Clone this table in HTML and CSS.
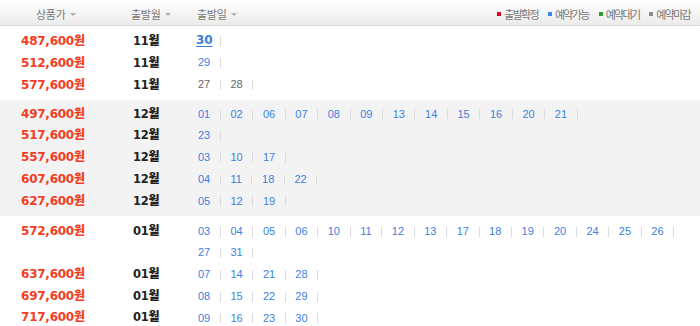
FILE: index.html
```html
<!DOCTYPE html>
<html lang="ko">
<head>
<meta charset="utf-8">
<link rel="stylesheet" href="styles.css">
</head>
<body>
<div class="board">
  <div class="head">
    <div class="hc hc-price">상품가<i class="arr"></i></div>
    <div class="hc hc-month">출발월<i class="arr"></i></div>
    <div class="hc hc-date">출발일<i class="arr"></i></div>
    <ul class="legend">
      <li><i class="sq red"></i>출발확정</li>
      <li><i class="sq blue"></i>예약가능</li>
      <li><i class="sq green"></i>예약대기</li>
      <li><i class="sq gray"></i>예약마감</li>
    </ul>
  </div>

  <div class="group g1">
    <div class="row"><div class="price">487,600<b>원</b></div><div class="month">11<b>월</b></div><div class="dates"><span class="it"><a class="on">30</a></span></div></div>
    <div class="row"><div class="price">512,600<b>원</b></div><div class="month">11<b>월</b></div><div class="dates"><span class="it"><a>29</a></span></div></div>
    <div class="row"><div class="price">577,600<b>원</b></div><div class="month">11<b>월</b></div><div class="dates"><span class="it"><a class="off">27</a></span><span class="it"><a class="off">28</a></span></div></div>
  </div>

  <div class="group g2">
    <div class="row"><div class="price">497,600<b>원</b></div><div class="month">12<b>월</b></div><div class="dates"><span class="it"><a>01</a></span><span class="it"><a>02</a></span><span class="it"><a>06</a></span><span class="it"><a>07</a></span><span class="it"><a>08</a></span><span class="it"><a>09</a></span><span class="it"><a>13</a></span><span class="it"><a>14</a></span><span class="it"><a>15</a></span><span class="it"><a>16</a></span><span class="it"><a>20</a></span><span class="it"><a>21</a></span></div></div>
    <div class="row"><div class="price">517,600<b>원</b></div><div class="month">12<b>월</b></div><div class="dates"><span class="it"><a>23</a></span></div></div>
    <div class="row"><div class="price">557,600<b>원</b></div><div class="month">12<b>월</b></div><div class="dates"><span class="it"><a>03</a></span><span class="it"><a>10</a></span><span class="it"><a>17</a></span></div></div>
    <div class="row"><div class="price">607,600<b>원</b></div><div class="month">12<b>월</b></div><div class="dates"><span class="it"><a>04</a></span><span class="it"><a>11</a></span><span class="it"><a>18</a></span><span class="it"><a>22</a></span></div></div>
    <div class="row"><div class="price">627,600<b>원</b></div><div class="month">12<b>월</b></div><div class="dates"><span class="it"><a>05</a></span><span class="it"><a>12</a></span><span class="it"><a>19</a></span></div></div>
  </div>

  <div class="group g3">
    <div class="row"><div class="price">572,600<b>원</b></div><div class="month">01<b>월</b></div><div class="dates"><span class="it"><a>03</a></span><span class="it"><a>04</a></span><span class="it"><a>05</a></span><span class="it"><a>06</a></span><span class="it"><a>10</a></span><span class="it"><a>11</a></span><span class="it"><a>12</a></span><span class="it"><a>13</a></span><span class="it"><a>17</a></span><span class="it"><a>18</a></span><span class="it"><a>19</a></span><span class="it"><a>20</a></span><span class="it"><a>24</a></span><span class="it"><a>25</a></span><span class="it"><a>26</a></span><span class="it"><a>27</a></span><span class="it"><a>31</a></span></div></div>
    <div class="row"><div class="price">637,600<b>원</b></div><div class="month">01<b>월</b></div><div class="dates"><span class="it"><a>07</a></span><span class="it"><a>14</a></span><span class="it"><a>21</a></span><span class="it"><a>28</a></span></div></div>
    <div class="row"><div class="price">697,600<b>원</b></div><div class="month">01<b>월</b></div><div class="dates"><span class="it"><a>08</a></span><span class="it"><a>15</a></span><span class="it"><a>22</a></span><span class="it"><a>29</a></span></div></div>
    <div class="row"><div class="price">717,600<b>원</b></div><div class="month">01<b>월</b></div><div class="dates"><span class="it"><a>09</a></span><span class="it"><a>16</a></span><span class="it"><a>23</a></span><span class="it"><a>30</a></span></div></div>
  </div>
</div>
</body>
</html>
```

FILE: styles.css
```css
html, body {
  margin: 0;
  padding: 0;
  background: #fff;
}
.board {
  width: 700px;
  font-family: "Liberation Sans", "Noto Sans CJK KR", sans-serif;
}
.head {
  display: flex;
  align-items: center;
  height: 25px;
  border-bottom: 1px solid #d9d9d9;
  background: linear-gradient(#ffffff, #ebebeb);
  font-family: "Noto Sans CJK KR", sans-serif;
  font-size: 11px;
  letter-spacing: -0.3px;
  color: #777;
}
.hc {
  display: flex;
  align-items: center;
  height: 25px;
  line-height: 12px;
  padding-top: 2px;
  box-sizing: border-box;
}
.hc-price { width: 100px; padding-left: 36px; }
.hc-month { width: 98px; padding-left: 31px; }
.hc-date { margin-left: -1px; }
.arr {
  display: inline-block;
  width: 0;
  height: 0;
  margin-left: 5px;
  margin-top: 2px;
  border-left: 3px solid transparent;
  border-right: 3px solid transparent;
  border-top: 3px solid #b0b0b0;
}
.legend {
  display: flex;
  gap: 10px;
  margin: 2px 10px 0 auto;
  padding: 0;
  list-style: none;
  font-size: 11px;
  line-height: 12px;
  letter-spacing: -1.7px;
  color: #777;
}
.legend li {
  display: flex;
  align-items: center;
}
.sq {
  display: inline-block;
  width: 4px;
  height: 4px;
  margin-right: 3px;
}
.sq.red { background: #e60012; }
.sq.blue { background: #3a86e0; }
.sq.green { background: #27a12a; }
.sq.gray { background: #8a8a8a; }

.group {
  padding: 3.6px 0 3.6px;
}
.g1 { padding-top: 4px; padding-bottom: 4px; }
.g1 .row { line-height: 22px; }
.g2 { background: #f3f3f3; }
.g3 { padding-top: 5px; }
.row {
  display: grid;
  grid-template-columns: 100px 98px 1fr;
  line-height: 21.75px;
}
.price {
  text-align: right;
  padding-right: 15px;
  font-family: "DejaVu Sans", sans-serif;
  font-weight: bold;
  font-size: 12px;
  letter-spacing: -0.25px;
  color: #f23d1f;
}
.price b, .month b {
  font-family: "Noto Sans CJK KR", sans-serif;
  font-size: 12px;
  line-height: 10px;
  letter-spacing: 0;
}
.month {
  padding-left: 33px;
  font-family: "DejaVu Sans", sans-serif;
  font-weight: bold;
  font-size: 11.5px;
  letter-spacing: -0.3px;
  color: #222;
}
.dates {
  display: flex;
  flex-wrap: wrap;
  line-height: 21.5px;
  font-size: 11px;
}
.it {
  display: inline-flex;
  align-items: center;
}
.it::after {
  content: "";
  display: inline-block;
  width: 1px;
  height: 10px;
  margin: 0 9.6px;
  background: #dcdcdc;
}
.it a {
  color: #3d7fdc;
  text-decoration: none;
}
.it a.off { color: #666; }
.it a.on {
  margin-left: -2px;
  margin-right: -2px;
  font-family: "DejaVu Sans", sans-serif;
  font-weight: bold;
  font-size: 12px;
  text-decoration: underline;
  text-underline-offset: 2px;
}
```
